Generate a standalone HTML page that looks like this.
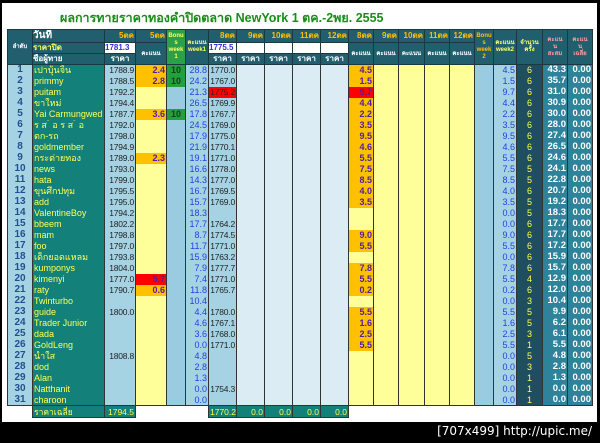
<!DOCTYPE html>
<html><head><meta charset="utf-8"><style>
body{margin:0;background:#000;width:600px;height:443px;overflow:hidden;position:relative;font-family:"Liberation Sans","Noto Sans CJK SC",sans-serif}
#w{position:absolute;left:2px;top:3px;width:595px;height:419px;background:#fff}
h1{position:absolute;left:60px;top:8px;margin:0;font-size:12.5px;color:#1a8c1a;font-weight:bold;white-space:nowrap}
table{position:absolute;left:7px;top:29px;width:584px;border-collapse:collapse;table-layout:fixed;font-size:9px;font-weight:bold}
td{padding:0 1px;overflow:hidden;white-space:nowrap;line-height:10px}
thead td{background:#215f6e;color:#fff;border:1px solid #1a3a40;text-align:center;font-size:8px;padding:0}
thead td.d{color:#ffc000;text-align:right;padding-right:1px}
thead td.in{background:#fff;color:#3030d0;text-align:left}
thead td.bn{background:#2aa048;color:#ffff66;font-size:6px;line-height:7px}
thead td.wk{color:#ffff66;font-size:6px;line-height:7px}
thead td.k{font-size:6px}
thead td.y{color:#ffff66;text-align:left}
tbody tr{height:11px}
tbody td{border-left:1px solid #333;border-right:1px solid #333}
tbody td:nth-child(1){color:#1f4f8f;text-align:center;font-size:10px}
tbody td:nth-child(2){color:#ffff55;font-weight:normal}
tbody td:nth-child(3),tbody td:nth-child(7){color:#222;text-align:right;font-weight:normal;font-size:8.5px;letter-spacing:-0.2px;padding:0 1px 0 0}
tbody td:nth-child(4),tbody td:nth-child(12){color:#5020a0;text-align:right}
tbody td:nth-child(5){text-align:center;color:#114411}
tbody td:nth-child(6),tbody td:nth-child(18){color:#2040e0;text-align:right;font-weight:normal}
tbody td:nth-child(19){color:#ffff55;text-align:center;font-weight:normal}
tbody td:nth-child(20),tbody td:nth-child(21){color:#fff;text-align:right;font-size:9.5px}
td.o{background:#ffc000}td.r{background:#ff0000}td.g{background:#22a040}
tfoot td{height:11px;border:1px solid #333;background:#14807a;color:#ffff55;text-align:right;font-weight:normal;font-size:8.5px}
tfoot td.n{background:#fff;border:none}
#u{position:absolute;right:8px;top:424px;color:#fff;font-size:12px;font-family:"DejaVu Sans",sans-serif}
</style></head><body>
<div id="w"></div>
<h1>ผลการทายราคาทองคำปิดตลาด NewYork 1 ตค.-2พย. 2555</h1>
<table>
<colgroup>
<col style="width:25px;background:#a6d3e3"><col style="width:72px;background:#14807a"><col style="width:31px;background:#a6d3e3"><col style="width:31px;background:#ffff99"><col style="width:19px;background:#99cce0"><col style="width:23px;background:#a6d3e3"><col style="width:28px;background:#a6d3e3"><col style="width:28px;background:#dcecf4"><col style="width:28px;background:#dcecf4"><col style="width:28px;background:#dcecf4"><col style="width:28px;background:#dcecf4"><col style="width:25px;background:#ffff99"><col style="width:25px;background:#ffff99"><col style="width:26px;background:#ffff99"><col style="width:25px;background:#ffff99"><col style="width:25px;background:#ffff99"><col style="width:19px;background:#99cce0"><col style="width:23px;background:#a6d3e3"><col style="width:26px;background:#1f4e5f"><col style="width:25px;background:#2e8299"><col style="width:25px;background:#2e8299">
</colgroup>
<thead>
<tr style="height:13px"><td rowspan="3" class="k">ลำดับ</td><td class="y" style="color:#fff;font-size:10px">วันที่</td><td class="d">5ตค</td><td class="d">5ตค</td><td rowspan="3" class="bn">Bonu<br>s<br>week<br>1</td><td rowspan="3" class="wk">คะแนน<br>week1</td><td class="d">8ตค</td><td class="d">9ตค</td><td class="d">10ตค</td><td class="d">11ตค</td><td class="d">12ตค</td><td class="d">8ตค</td><td class="d">9ตค</td><td class="d">10ตค</td><td class="d">11ตค</td><td class="d">12ตค</td><td rowspan="3" class="wk" style="color:#ffc000">Bonu<br>s<br>week<br>2</td><td rowspan="3" class="wk">คะแนน<br>week2</td><td rowspan="3" class="wk">จำนวน<br>ครั้ง</td><td rowspan="3" class="wk" style="color:#ff9999">คะแน<br>น<br>สะสม</td><td rowspan="3" class="wk" style="color:#ff9999">คะแน<br>น<br>เฉลี่ย</td></tr>
<tr style="height:11px"><td class="y">ราคาปิด</td><td class="in">1781.3</td><td rowspan="2" class="k">คะแนน</td><td class="in">1775.5</td><td class="in"></td><td class="in"></td><td class="in"></td><td class="in"></td><td rowspan="2" class="k">คะแนน</td><td rowspan="2" class="k">คะแนน</td><td rowspan="2" class="k">คะแนน</td><td rowspan="2" class="k">คะแนน</td><td rowspan="2" class="k">คะแนน</td></tr>
<tr style="height:11px"><td style="text-align:left">ชื่อผู้ทาย</td><td>ราคา</td><td>ราคา</td><td>ราคา</td><td>ราคา</td><td>ราคา</td><td>ราคา</td></tr>
</thead>
<tbody>
<tr><td>1</td><td>เปาบุ้นจิ้น</td><td>1788.9</td><td class="o">2.4</td><td class="g">10</td><td>28.8</td><td>1770.0</td><td></td><td></td><td></td><td></td><td class="o">4.5</td><td></td><td></td><td></td><td></td><td></td><td>4.5</td><td>6</td><td>43.3</td><td>0.00</td></tr>
<tr><td>2</td><td>primmy</td><td>1788.5</td><td class="o">2.8</td><td class="g">10</td><td>24.2</td><td>1767.0</td><td></td><td></td><td></td><td></td><td class="o">1.5</td><td></td><td></td><td></td><td></td><td></td><td>1.5</td><td>6</td><td>35.7</td><td>0.00</td></tr>
<tr><td>3</td><td>puitam</td><td>1792.2</td><td></td><td></td><td>21.3</td><td class="r">1775.2</td><td></td><td></td><td></td><td></td><td class="r">9.7</td><td></td><td></td><td></td><td></td><td></td><td>9.7</td><td>6</td><td>31.0</td><td>0.00</td></tr>
<tr><td>4</td><td>ขาใหม่</td><td>1794.4</td><td></td><td></td><td>26.5</td><td>1769.9</td><td></td><td></td><td></td><td></td><td class="o">4.4</td><td></td><td></td><td></td><td></td><td></td><td>4.4</td><td>6</td><td>30.9</td><td>0.00</td></tr>
<tr><td>5</td><td>Yai Carmungwed</td><td>1787.7</td><td class="o">3.6</td><td class="g">10</td><td>17.8</td><td>1767.7</td><td></td><td></td><td></td><td></td><td class="o">2.2</td><td></td><td></td><td></td><td></td><td></td><td>2.2</td><td>6</td><td>30.0</td><td>0.00</td></tr>
<tr><td>6</td><td>ร ส ้ อ ร ส ้ อ</td><td>1792.0</td><td></td><td></td><td>24.5</td><td>1769.0</td><td></td><td></td><td></td><td></td><td class="o">3.5</td><td></td><td></td><td></td><td></td><td></td><td>3.5</td><td>6</td><td>28.0</td><td>0.00</td></tr>
<tr><td>7</td><td>ตก-รถ</td><td>1798.0</td><td></td><td></td><td>17.9</td><td>1775.0</td><td></td><td></td><td></td><td></td><td class="o">9.5</td><td></td><td></td><td></td><td></td><td></td><td>9.5</td><td>6</td><td>27.4</td><td>0.00</td></tr>
<tr><td>8</td><td>goldmember</td><td>1794.9</td><td></td><td></td><td>21.9</td><td>1770.1</td><td></td><td></td><td></td><td></td><td class="o">4.6</td><td></td><td></td><td></td><td></td><td></td><td>4.6</td><td>6</td><td>26.5</td><td>0.00</td></tr>
<tr><td>9</td><td>กระต่ายทอง</td><td>1789.0</td><td class="o">2.3</td><td></td><td>19.1</td><td>1771.0</td><td></td><td></td><td></td><td></td><td class="o">5.5</td><td></td><td></td><td></td><td></td><td></td><td>5.5</td><td>6</td><td>24.6</td><td>0.00</td></tr>
<tr><td>10</td><td>news</td><td>1793.0</td><td></td><td></td><td>16.6</td><td>1778.0</td><td></td><td></td><td></td><td></td><td class="o">7.5</td><td></td><td></td><td></td><td></td><td></td><td>7.5</td><td>5</td><td>24.1</td><td>0.00</td></tr>
<tr><td>11</td><td>hata</td><td>1799.0</td><td></td><td></td><td>14.3</td><td>1777.0</td><td></td><td></td><td></td><td></td><td class="o">8.5</td><td></td><td></td><td></td><td></td><td></td><td>8.5</td><td>5</td><td>22.8</td><td>0.00</td></tr>
<tr><td>12</td><td>ขุนศึกปทุม</td><td>1795.5</td><td></td><td></td><td>16.7</td><td>1769.5</td><td></td><td></td><td></td><td></td><td class="o">4.0</td><td></td><td></td><td></td><td></td><td></td><td>4.0</td><td>6</td><td>20.7</td><td>0.00</td></tr>
<tr><td>13</td><td>add</td><td>1795.0</td><td></td><td></td><td>15.7</td><td>1769.0</td><td></td><td></td><td></td><td></td><td class="o">3.5</td><td></td><td></td><td></td><td></td><td></td><td>3.5</td><td>5</td><td>19.2</td><td>0.00</td></tr>
<tr><td>14</td><td>ValentineBoy</td><td>1794.2</td><td></td><td></td><td>18.3</td><td></td><td></td><td></td><td></td><td></td><td></td><td></td><td></td><td></td><td></td><td></td><td>0.0</td><td>5</td><td>18.3</td><td>0.00</td></tr>
<tr><td>15</td><td>bbeem</td><td>1802.2</td><td></td><td></td><td>17.7</td><td>1764.2</td><td></td><td></td><td></td><td></td><td></td><td></td><td></td><td></td><td></td><td></td><td>0.0</td><td>6</td><td>17.7</td><td>0.00</td></tr>
<tr><td>16</td><td>mam</td><td>1798.8</td><td></td><td></td><td>8.7</td><td>1774.5</td><td></td><td></td><td></td><td></td><td class="o">9.0</td><td></td><td></td><td></td><td></td><td></td><td>9.0</td><td>6</td><td>17.7</td><td>0.00</td></tr>
<tr><td>17</td><td>foo</td><td>1797.0</td><td></td><td></td><td>11.7</td><td>1771.0</td><td></td><td></td><td></td><td></td><td class="o">5.5</td><td></td><td></td><td></td><td></td><td></td><td>5.5</td><td>6</td><td>17.2</td><td>0.00</td></tr>
<tr><td>18</td><td>เด็กยอดแหลม</td><td>1793.8</td><td></td><td></td><td>15.9</td><td>1763.2</td><td></td><td></td><td></td><td></td><td></td><td></td><td></td><td></td><td></td><td></td><td>0.0</td><td>6</td><td>15.9</td><td>0.00</td></tr>
<tr><td>19</td><td>kumponys</td><td>1804.0</td><td></td><td></td><td>7.9</td><td>1777.7</td><td></td><td></td><td></td><td></td><td class="o">7.8</td><td></td><td></td><td></td><td></td><td></td><td>7.8</td><td>6</td><td>15.7</td><td>0.00</td></tr>
<tr><td>20</td><td>kimenyi</td><td>1777.0</td><td class="r">5.7</td><td></td><td>7.4</td><td>1771.0</td><td></td><td></td><td></td><td></td><td class="o">5.5</td><td></td><td></td><td></td><td></td><td></td><td>5.5</td><td>4</td><td>12.9</td><td>0.00</td></tr>
<tr><td>21</td><td>raty</td><td>1790.7</td><td class="o">0.6</td><td></td><td>11.8</td><td>1765.7</td><td></td><td></td><td></td><td></td><td class="o">0.2</td><td></td><td></td><td></td><td></td><td></td><td>0.2</td><td>6</td><td>12.0</td><td>0.00</td></tr>
<tr><td>22</td><td>Twinturbo</td><td></td><td></td><td></td><td>10.4</td><td></td><td></td><td></td><td></td><td></td><td></td><td></td><td></td><td></td><td></td><td></td><td>0.0</td><td>3</td><td>10.4</td><td>0.00</td></tr>
<tr><td>23</td><td>guide</td><td>1800.0</td><td></td><td></td><td>4.4</td><td>1780.0</td><td></td><td></td><td></td><td></td><td class="o">5.5</td><td></td><td></td><td></td><td></td><td></td><td>5.5</td><td>5</td><td>9.9</td><td>0.00</td></tr>
<tr><td>24</td><td>Trader Junior</td><td></td><td></td><td></td><td>4.6</td><td>1767.1</td><td></td><td></td><td></td><td></td><td class="o">1.6</td><td></td><td></td><td></td><td></td><td></td><td>1.6</td><td>5</td><td>6.2</td><td>0.00</td></tr>
<tr><td>25</td><td>dada</td><td></td><td></td><td></td><td>3.6</td><td>1768.0</td><td></td><td></td><td></td><td></td><td class="o">2.5</td><td></td><td></td><td></td><td></td><td></td><td>2.5</td><td>3</td><td>6.1</td><td>0.00</td></tr>
<tr><td>26</td><td>GoldLeng</td><td></td><td></td><td></td><td>0.0</td><td>1771.0</td><td></td><td></td><td></td><td></td><td class="o">5.5</td><td></td><td></td><td></td><td></td><td></td><td>5.5</td><td>1</td><td>5.5</td><td>0.00</td></tr>
<tr><td>27</td><td>น้ำใส</td><td>1808.8</td><td></td><td></td><td>4.8</td><td></td><td></td><td></td><td></td><td></td><td></td><td></td><td></td><td></td><td></td><td></td><td>0.0</td><td>5</td><td>4.8</td><td>0.00</td></tr>
<tr><td>28</td><td>dod</td><td></td><td></td><td></td><td>2.8</td><td></td><td></td><td></td><td></td><td></td><td></td><td></td><td></td><td></td><td></td><td></td><td>0.0</td><td>3</td><td>2.8</td><td>0.00</td></tr>
<tr><td>29</td><td>Alan</td><td></td><td></td><td></td><td>1.3</td><td></td><td></td><td></td><td></td><td></td><td></td><td></td><td></td><td></td><td></td><td></td><td>0.0</td><td>1</td><td>1.3</td><td>0.00</td></tr>
<tr><td>30</td><td>Natthanit</td><td></td><td></td><td></td><td>0.0</td><td>1754.3</td><td></td><td></td><td></td><td></td><td></td><td></td><td></td><td></td><td></td><td></td><td>0.0</td><td>1</td><td>0.0</td><td>0.00</td></tr>
<tr style="border-bottom:1px solid #333"><td>31</td><td>charoon</td><td></td><td></td><td></td><td>0.0</td><td></td><td></td><td></td><td></td><td></td><td></td><td></td><td></td><td></td><td></td><td></td><td>0.0</td><td>1</td><td>0.0</td><td>0.00</td></tr>
</tbody>
<tfoot>
<tr><td class="n"></td><td style="text-align:left">ราคาเฉลี่ย</td><td>1794.5</td><td class="n"></td><td class="n"></td><td class="n"></td><td>1770.2</td><td>0.0</td><td>0.0</td><td>0.0</td><td>0.0</td><td class="n" colspan="10"></td></tr>
</tfoot>
</table>
<div id="u">[707x499] http://upic.me/</div>
</body></html>
